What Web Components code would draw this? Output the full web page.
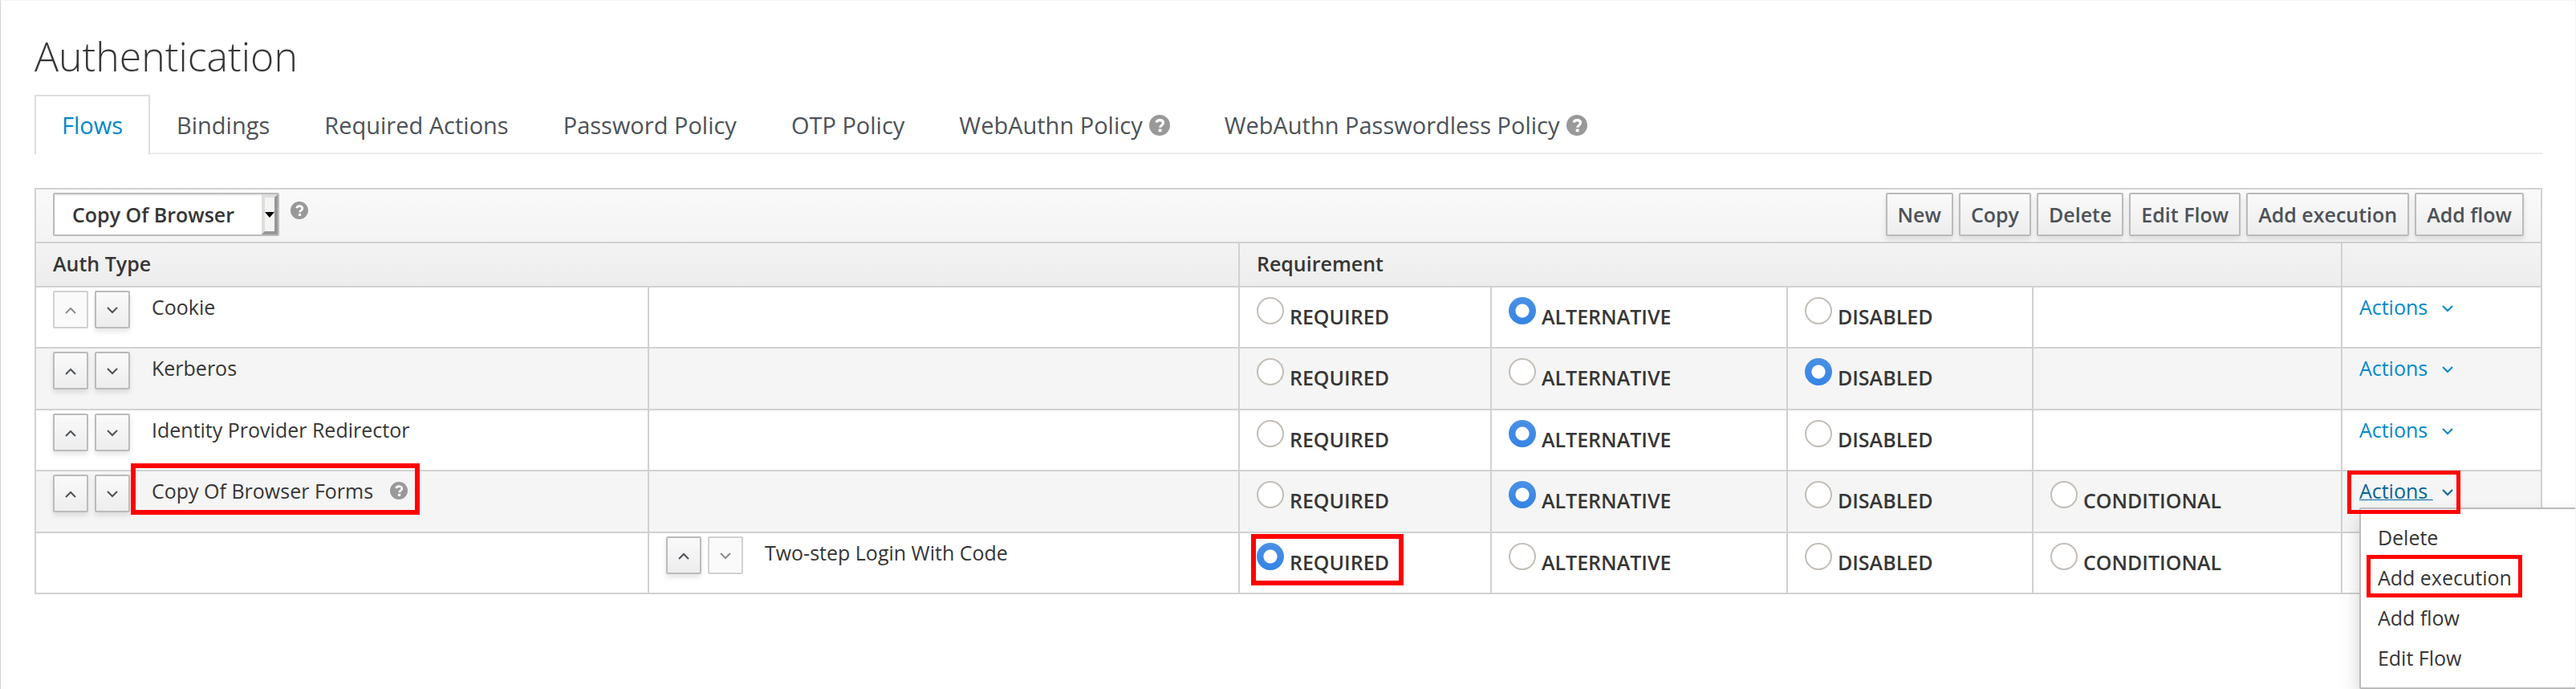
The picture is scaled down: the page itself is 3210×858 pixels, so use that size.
<!DOCTYPE html>
<html lang="en">
<head>
<meta charset="utf-8">
<title>Authentication</title>
<style>
  body { margin: 0; background: #fff; color: #363636; font: 25px/34px "Open Sans", "Noto Sans", sans-serif; }
</style>
</head>
<body>
<auth-page></auth-page>

<script>
const chevron = dir => `<svg class="chev" width="14" height="9" viewBox="0 0 14 9" fill="none" stroke="currentColor" stroke-width="2" aria-hidden="true"><path d="${dir === 'up' ? 'M1 8 7 2l6 6' : 'M1 1l6 6 6-6'}"/></svg>`;

const define = (name, html, setup) => {
  const template = document.createElement('template');
  template.innerHTML = html;
  customElements.define(name, class extends HTMLElement {
    constructor() {
      super();
      this.attachShadow({ mode: 'open' }).append(template.content.cloneNode(true));
    }
    connectedCallback() { if (setup) setup(this, this.shadowRoot); }
  });
};

/* Round question-mark hint */
define('help-icon', `
<style>
  :host { display: block; flex: none; width: var(--size, 22px); height: var(--size, 22px); color: #999; }
  svg { display: block; width: 100%; height: 100%; }
</style>
<svg viewBox="0 0 26 26" role="img" aria-label="Help"><circle cx="13" cy="13" r="13" fill="currentColor"/><path d="M8.900 9.600C9.600 7.500 11 6.600 13.200 6.600c2.600 0 4.300 1.400 4.300 3.400 0 2.900-3.700 2.900-3.700 5.700" fill="none" stroke="#fff" stroke-width="3.200"/><rect x="11.700" y="17.600" width="3.800" height="3.600" fill="#fff"/></svg>`);

/* Red frame drawn around whatever is slotted in */
define('mark-box', `
<style>
  :host { display: inline-flex; align-items: center; position: relative; vertical-align: top; }
  .frame { position: absolute; inset: var(--inset); border: var(--stroke, 6px) solid #f00; pointer-events: none; z-index: 3; }
</style>
<slot></slot><span class="frame"></span>`);

define('tool-button', `
<style>
  :host { display: block; }
  button { height: 54px; margin: 0; padding: 0 13px; font: 600 25px/34px "Open Sans", "Noto Sans", sans-serif; color: #4d5258;
    background: linear-gradient(#fafafa, #ededed); border: 2px solid #bbb; border-radius: 2px; box-shadow: 0 4px 6px rgba(3,3,3,.1); white-space: nowrap; display: block; }
</style>
<button type="button"><slot></slot></button>`);

/* Pair of move up / move down buttons */
define('order-buttons', `
<style>
  :host { display: flex; gap: 8px; flex: none; }
  button { width: 44px; height: 47px; margin: 0; padding: 2px 0 0; display: flex; align-items: center; justify-content: center; color: #4d5258;
    background: linear-gradient(#fafafa, #ededed); border: 2px solid #bbb; border-radius: 2px; box-shadow: 0 4px 6px rgba(3,3,3,.1); }
  button:disabled { background: #fafafa; border-color: #d1d1d1; color: #8b8d8f; box-shadow: none; }
</style>
<button type="button" class="up" aria-label="Move up">${chevron('up')}</button>
<button type="button" class="down" aria-label="Move down">${chevron('down')}</button>`,
(host, root) => {
  root.querySelector('.up').disabled = host.hasAttribute('first');
  root.querySelector('.down').disabled = host.hasAttribute('last');
});

define('flow-select', `
<style>
  :host { display: block; position: relative; width: 282px; }
  select { appearance: none; display: block; box-sizing: border-box; width: 100%; height: 54px; margin: 0; padding: 0 24px 0 22px;
    font: 600 25px/34px "Open Sans", "Noto Sans", sans-serif; color: #363636; background: #fff; border: 2px solid #bbb; border-radius: 2px; box-shadow: inset 0 2px 2px rgba(3,3,3,.07); }
  .knob { position: absolute; top: 2px; right: 2px; bottom: 2px; width: 20px; box-sizing: border-box; pointer-events: none;
    border: 4px solid; border-color: #dedede #979797 #979797 #dedede; background: #f5f4f2; display: flex; align-items: center; justify-content: center; }
  svg { flex: none; }
</style>
<select aria-label="Flow"><option>Copy Of Browser</option></select>
<span class="knob"><svg width="12" height="7" viewBox="0 0 12 7" aria-hidden="true"><path d="M0 0h12L6 7z" fill="#000"/></svg></span>`);

define('actions-link', `
<style>
  :host { display: block; position: relative; height: 34px; }
  a { display: inline-flex; align-items: center; gap: 11px; color: #0088ce; text-decoration: none; vertical-align: top; }
  a .text { white-space: pre; }
  .chev { flex: none; margin-top: 4px; }
  :host([open]) a.toggle { color: #00659c; }
  :host([open]) .text { text-decoration: underline; text-decoration-thickness: 1px; }
  mark-box { --inset: -8px -9px -12px -15px; --stroke: 5px; }
  .menu { position: absolute; z-index: 2; top: calc(100% + 4px); left: 0; width: 320px; margin: 0; padding: 10px 0 12px; list-style: none;
    background: #fff; border: 2px solid #bbb; border-radius: 2px; box-shadow: 0 12px 24px rgba(3,3,3,.175); }
  .menu li { display: flex; }
  .menu a { flex: 1; height: 50px; padding: 0 21px; color: #363636; }
  .menu mark-box { --inset: -11px -13px -8px -14px; --stroke: 5px; }
</style>
<div class="root"></div>`,
(host, root) => {
  const link = `<a class="toggle" href="#"><span class="text">Actions </span>${chevron('down')}</a>`;
  root.querySelector('.root').innerHTML = host.hasAttribute('open')
    ? `<mark-box>${link}</mark-box>
       <ul class="menu">
         <li><a href="#">Delete</a></li>
         <li><a href="#"><mark-box>Add execution</mark-box></a></li>
         <li><a href="#">Add flow</a></li>
         <li><a href="#">Edit Flow</a></li>
       </ul>`
    : link;
});

define('page-tabs', `
<style>
  :host { display: block; }
  nav { display: flex; box-shadow: inset 0 -2px #ededed; }
  a { display: flex; align-items: center; gap: 8px; padding: 16px 32px 16px 31px; border: 2px solid transparent; border-bottom: 0; color: #4d5258; font-size: 29px; line-height: 40px; text-decoration: none; white-space: nowrap; }
  a.active { color: #0088ce; background: #fff; border-color: #dedede; padding-left: 32px; }
  a:nth-child(n+3) { padding-left: 32px; }
  help-icon { --size: 26px; }
</style>
<nav>
  <a class="active" href="#" aria-current="page">Flows</a>
  <a href="#">Bindings</a>
  <a href="#">Required Actions</a>
  <a href="#">Password Policy</a>
  <a href="#">OTP Policy</a>
  <a href="#">WebAuthn Policy <help-icon></help-icon></a>
  <a href="#">WebAuthn Passwordless Policy <help-icon></help-icon></a>
</nav>`);

const rows = [
  { name: 'Cookie', value: 'ALTERNATIVE', edge: 'first' },
  { name: 'Kerberos', value: 'DISABLED' },
  { name: 'Identity Provider Redirector', value: 'ALTERNATIVE' },
  { name: 'Copy Of Browser Forms', value: 'ALTERNATIVE', help: true, marked: true, conditional: true, open: true },
  { name: 'Two-step Login With Code', value: 'REQUIRED', edge: 'last', nested: true, conditional: true, markedChoice: true }
];

const nameCell = r => {
  const label = `<span>${r.name}</span>`;
  const text = r.marked ? `<mark-box>${label}<help-icon></help-icon></mark-box>` : label;
  return `<div class="name"><order-buttons ${r.edge || ''}></order-buttons><div class="title">${text}</div></div>`;
};
const choice = (r, i, option) => {
  const label = `<label class="choice"><input type="radio" name="row${i}" ${r.value === option ? 'checked' : ''}><span>${option}</span></label>`;
  return r.markedChoice && r.value === option ? `<mark-box class="choice-mark">${label}</mark-box>` : label;
};

define('flow-table', `
<style>
  :host { display: block; }
  table { width: 100%; table-layout: fixed; border-collapse: collapse; }
  .c2 { width: 736px; } .c3 { width: 314px; } .c4 { width: 369px; } .c5 { width: 306px; } .c6 { width: 385px; } .c7 { width: 249px; }
  th, td { border: 2px solid #d1d1d1; padding: 4px 21px 0; vertical-align: top; text-align: left; }
  thead { background: linear-gradient(#fafafa, #ededed); }
  thead th { font-weight: 600; padding: 8px 21px 11px; }
  thead th.bar { padding: 4px 21px 7px; }
  .tools { display: flex; gap: 7px; align-items: center; }
  .tools help-icon { margin: 0 auto 10px 7px; }
  tbody tr { height: 76px; }
  tbody tr:nth-child(even) { height: 77px; background: #f5f5f5; }
  .name { display: flex; gap: 27px; white-space: nowrap; }
  .title { padding-top: 3px; }
  .title mark-box { --inset: -17px -15px -13px -26px; }
  .title help-icon { margin-left: 21px; }
  td.pick { padding-top: 12px; }
  td.act { padding-top: 7px; }
  .choice { display: inline-flex; align-items: baseline; gap: 7px; font-weight: 600; vertical-align: top; white-space: nowrap; }
  .choice-mark { --inset: -11px -18px -12px -7px; }
  input { appearance: none; box-sizing: border-box; flex: none; width: 34px; height: 34px; margin: 0; border: 2px solid #c4beb7; border-radius: 50%; background: #fff; }
  input:checked { border: 0; background: radial-gradient(circle, #fff 8px, transparent 9px), linear-gradient(#4a90e6, #3584e4); }
</style>
<table>
  <colgroup><col><col class="c2"><col class="c3"><col class="c4"><col class="c5"><col class="c6"><col class="c7"></colgroup>
  <thead>
    <tr><th class="bar" colspan="7"><div class="tools">
      <flow-select></flow-select><help-icon></help-icon>
      <tool-button>New</tool-button><tool-button>Copy</tool-button><tool-button>Delete</tool-button>
      <tool-button>Edit Flow</tool-button><tool-button>Add execution</tool-button><tool-button>Add flow</tool-button>
    </div></th></tr>
    <tr><th colspan="2">Auth Type</th><th colspan="4">Requirement</th><th></th></tr>
  </thead>
  <tbody>${rows.map((r, i) => `<tr>
    <td>${r.nested ? '' : nameCell(r)}</td>
    <td>${r.nested ? nameCell(r) : ''}</td>
    <td class="pick">${choice(r, i, 'REQUIRED')}</td>
    <td class="pick">${choice(r, i, 'ALTERNATIVE')}</td>
    <td class="pick">${choice(r, i, 'DISABLED')}</td>
    <td class="pick">${r.conditional ? choice(r, i, 'CONDITIONAL') : ''}</td>
    <td class="act">${r.nested ? '' : `<actions-link ${r.open ? 'open' : ''}></actions-link>`}</td>
  </tr>`).join('')}</tbody>
</table>`);

define('auth-page', `
<style>
  :host { display: block; box-sizing: border-box; min-height: 100vh; padding: 34px 41px 0 42px; overflow: clip;
    border: 1px solid #f5f5f5; border-bottom: 0; border-left-color: #d1d1d1; }
  h1 { margin: 0 0 13px; font-size: 50px; line-height: 70px; font-weight: 300; }
  flow-table { margin-top: 42px; }
</style>
<h1>Authentication</h1>
<page-tabs></page-tabs>
<flow-table></flow-table>`);
</script>
</body>
</html>
